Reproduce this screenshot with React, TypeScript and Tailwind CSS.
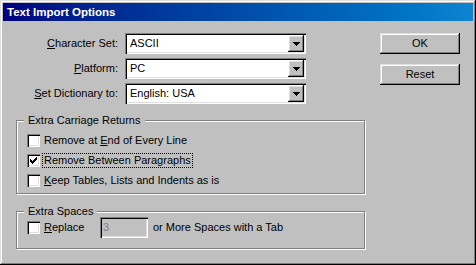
import React from "react";

const sunken =
  "shadow-[inset_1px_1px_0_#808080,inset_2px_2px_0_#000,inset_-1px_-1px_0_#fff,inset_-2px_-2px_0_#dfdfdf]";
const raised =
  "shadow-[inset_-1px_-1px_0_#000,inset_1px_1px_0_#fff,inset_-2px_-2px_0_#808080,inset_2px_2px_0_#dfdfdf]";
const raisedBtn =
  "shadow-[inset_-1px_-1px_0_#000,inset_1px_1px_0_#dfdfdf,inset_-2px_-2px_0_#808080,inset_2px_2px_0_#fff]";

function Combo({ value }: { value: string }) {
  return (
    <div className={`relative h-[21px] w-[181px] bg-white flex items-center ${sunken}`}>
      <span className="pl-[5px] flex-1">{value}</span>
      <div
        className={`mr-[2px] h-[17px] w-[16px] bg-[#c0c0c0] flex items-center justify-center ${raised}`}
      >
        <svg width="7" height="4" viewBox="0 0 7 4" shapeRendering="crispEdges">
          <path d="M0 0h7v1H0z M1 1h5v1H1z M2 2h3v1H2z M3 3h1v1H3z" fill="#000" />
        </svg>
      </div>
    </div>
  );
}

function Check({ checked }: { checked?: boolean }) {
  return (
    <div className={`h-[13px] w-[13px] shrink-0 bg-white flex items-center justify-center ${sunken}`}>
      {checked && (
        <svg width="7" height="7" viewBox="0 0 7 7" shapeRendering="crispEdges">
          <path
            d="M6 0h1v1H6z M5 1h2v1H5z M0 2h1v1H0z M4 2h3v1H4z M0 3h2v1H0z M3 3h3v1H3z M0 4h5v1H0z M1 5h3v1H1z M2 6h1v1H2z"
            fill="#000"
          />
        </svg>
      )}
    </div>
  );
}

function Group({
  title,
  className,
  children,
}: {
  title: string;
  className: string;
  children: React.ReactNode;
}) {
  return (
    <div
      className={`relative border border-[#808080] shadow-[1px_1px_0_#fff,inset_1px_1px_0_#fff] ${className}`}
    >
      <div className="absolute left-[7px] -top-[8px] px-[4px] bg-[#c0c0c0] leading-[14px]">
        {title}
      </div>
      {children}
    </div>
  );
}

export default function App() {
  return (
    <div
      className="w-[476px] h-[265px] bg-[#c0c0c0] p-[3px] text-[11px] leading-[13px] text-black font-['Liberation_Sans',Arial,sans-serif] shadow-[inset_-1px_-1px_0_#000,inset_1px_1px_0_#dfdfdf,inset_-2px_-2px_0_#808080,inset_2px_2px_0_#fff]"
    >
      <div className="h-[18px] flex items-center pl-[4px] bg-linear-to-r from-[#000080] to-[#1084d0] text-white font-bold text-[11.5px]">
        Text Import Options
      </div>
      <div className="flex pt-[12px] pl-[13px]">
        <div className="w-[349px] flex flex-col">
          <div className="grid grid-cols-[102px_181px] gap-x-[7px] gap-y-[4px] items-center">
            <span className="text-right">
              <u>C</u>haracter Set:
            </span>
            <Combo value="ASCII" />
            <span className="text-right">
              <u>P</u>latform:
            </span>
            <Combo value="PC" />
            <span className="text-right">
              <u>S</u>et Dictionary to:
            </span>
            <Combo value="English: USA" />
          </div>

          <Group title="Extra Carriage Returns" className="mt-[16px] h-[74px] pt-[9px] pl-[10px]">
            <div className="h-[20px] flex items-center">
              <Check />
              <span className="ml-[4px]">
                Remove at <u>E</u>nd of Every Line
              </span>
            </div>
            <div className="h-[20px] flex items-center">
              <Check checked />
              <span className="ml-[3px] px-[1px] outline-1 outline-dotted outline-black">
                Remove Between Paragraphs
              </span>
            </div>
            <div className="h-[20px] flex items-center">
              <Check />
              <span className="ml-[4px]">
                <u>K</u>eep Tables, Lists and Indents as is
              </span>
            </div>
          </Group>

          <Group title="Extra Spaces" className="mt-[17px] h-[38px] pt-[5px] pl-[10px]">
            <div className="h-[21px] flex items-center">
              <Check />
              <span className="ml-[4px] w-[56px]">
                <u>R</u>eplace
              </span>
              <div className={`h-[21px] w-[48px] bg-[#c0c0c0] flex items-center pl-[3px] text-[#808080] ${sunken}`}>
                3
              </div>
              <span className="ml-[5px]">or More Spaces with a Tab</span>
            </div>
          </Group>
        </div>

        <div className="ml-[15px] flex flex-col gap-[10px]">
          <button className={`h-[21px] w-[80px] bg-[#c0c0c0] flex items-center justify-center ${raisedBtn}`}>
            OK
          </button>
          <button className={`h-[21px] w-[80px] bg-[#c0c0c0] flex items-center justify-center ${raisedBtn}`}>
            Reset
          </button>
        </div>
      </div>
    </div>
  );
}
